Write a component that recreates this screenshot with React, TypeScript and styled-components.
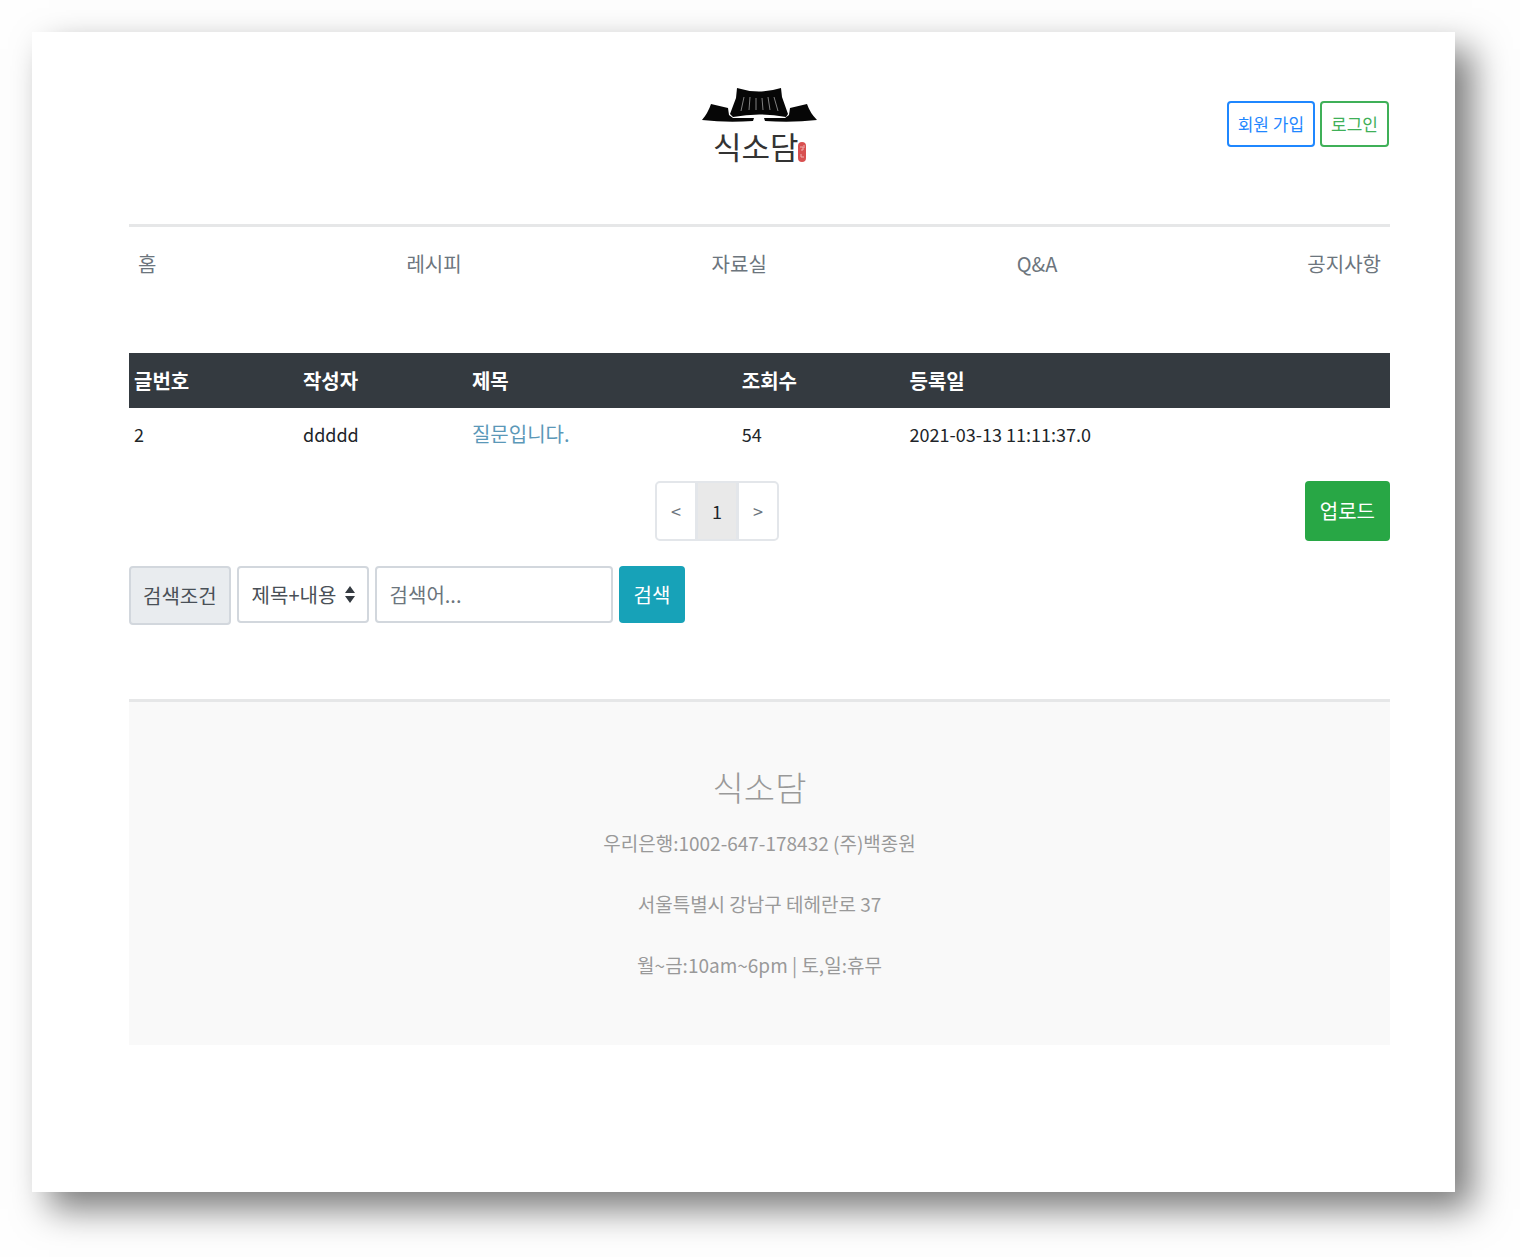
import React from "react";
import styled, { createGlobalStyle, css } from "styled-components";

const GlobalStyle = createGlobalStyle`
  *, *::before, *::after { box-sizing: border-box; }
  body {
    margin: 0;
    background: #fefefe;
    color: #212529;
    font-family: "Noto Sans CJK KR", "Noto Sans", sans-serif;
    font-size: 20px;
    line-height: 30px;
  }
  button, input, select { font: inherit; margin: 0; }
  a { text-decoration: none; color: inherit; }
`;

const Sheet = styled.div`
  margin: 32px 65px 65px 32px;
  padding: 0 65px 147px 97px;
  background: #fff;
  box-shadow: 17px 17px 34px rgba(0, 0, 0, 0.52);
`;

const Header = styled.header`
  display: grid;
  grid-template-columns: 1fr auto 1fr;
  align-items: center;
  height: 192px;
`;

const LogoLink = styled.a`
  grid-column: 2;
  display: block;
  height: 88px;
`;

const Account = styled.div`
  display: flex;
  justify-content: flex-end;
  gap: 5px;
  padding: 0 1px 8px 0;
`;

const OutlineButton = styled.button<{ $color: string }>`
  height: 46px;
  padding: 0 9px;
  border: 2px solid ${(p) => p.$color};
  border-radius: 4px;
  background: transparent;
  color: ${(p) => p.$color};
  font-size: 17px;
`;

const Nav = styled.nav`
  display: flex;
  justify-content: space-between;
  border-top: 3px solid #e6e7e8;
  padding: 22px 9px 74px;
  color: #6c757d;
`;

const Table = styled.table`
  width: 100%;
  table-layout: fixed;
  border-collapse: collapse;
  text-align: left;
`;

const HeadCell = styled.th<{ $share?: number }>`
  width: ${(p) => (p.$share ? `${p.$share}%` : "auto")};
  height: 55px;
  padding: 0 5px;
  background: #343a40;
  color: #fff;
  font-weight: 700;
`;

const Cell = styled.td<{ $latin?: boolean }>`
  height: 52px;
  padding: 0 5px;
  font-size: ${(p) => (p.$latin ? 18 : 20)}px;
`;

const PostLink = styled.a`
  color: #5b98b8;
`;

const Actions = styled.div`
  display: flex;
  align-items: center;
  margin-top: 21px;
`;

const Pager = styled.div`
  flex: 1;
  display: flex;
  justify-content: center;
`;

const PageButton = styled.button<{ $current?: boolean }>`
  width: 42px;
  height: 60px;
  padding: 0;
  border: 2px solid #e3e6ea;
  background: ${(p) => (p.$current ? "#e9e9e9" : "#fff")};
  color: ${(p) => (p.$current ? "#212529" : "#6c757d")};
  font-size: 18px;

  & + & { margin-left: -1px; }
  &:first-child { border-radius: 5px 0 0 5px; }
  &:last-child { border-radius: 0 5px 5px 0; }
`;

const SolidButton = styled.button<{ $color: string; $tall?: boolean }>`
  height: ${(p) => (p.$tall ? 60 : 57)}px;
  padding: 0 15px;
  border: 0;
  border-radius: 4px;
  background: ${(p) => p.$color};
  color: #fff;
`;

const Search = styled.form`
  display: flex;
  align-items: flex-start;
  gap: 6px;
  margin-top: 25px;
`;

const field = css`
  border: 2px solid #d2d7dd;
  border-radius: 4px;
`;

const SearchLabel = styled.label`
  ${field}
  height: 59px;
  padding: 0 12px;
  background: #e9ecef;
  color: #495057;
  line-height: 55px;
`;

const SelectBox = styled.div`
  position: relative;
  color: #343a40;

  svg {
    position: absolute;
    right: 14px;
    top: 20px;
    pointer-events: none;
  }
`;

const Select = styled.select`
  ${field}
  appearance: none;
  display: block;
  width: 132px;
  height: 57px;
  padding: 0 13px;
  background: #fff;
  color: #495057;
`;

const Keyword = styled.input`
  ${field}
  width: 238px;
  height: 57px;
  padding: 0 13px;
  background: #fff;
  color: #495057;

  &::placeholder { color: #6c757d; opacity: 1; }
`;

const Footer = styled.footer`
  margin-top: 74px;
  padding: 60px 0 65px;
  border-top: 3px solid #e6e7e8;
  background: #f9f9f9;
  color: #999;
  text-align: center;
  font-size: 19px;
`;

const Brand = styled.h2`
  margin: 0 0 16px;
  font-size: 34px;
  font-weight: 300;
  line-height: 50px;
`;

const Info = styled.p`
  margin: 0;

  & + & { margin-top: 31px; }
`;

const Logo = () => (
  <svg width="116" height="88" viewBox="0 0 116 88" overflow="visible" role="img" aria-label="식소담">
    <path d="M35 4 Q57 11 79 4 L80 13 L86 30 L84 33 Q57 28 31 33 L28 30 L34 14Z" fill="#060606" />
    <path d="M9 20 L26 24 L27 31 L31 34 L52 34 L51 37 Q25 39 0 36 Q6 29 9 20Z" fill="#060606" />
    <path d="M105 20 L88 24 L87 31 L83 34 L62 34 L63 37 Q90 39 115 36 Q108 29 105 20Z" fill="#060606" />
    <path
      d="M42 13 L39 27 M48 13 L47 26 M54 14 V26 M60 14 L61 26 M66 13 L68 26 M72 13 L76 27"
      stroke="#808080"
      strokeWidth="1"
      fill="none"
    />
    <text x="11" y="75" fontSize="31" fontWeight="400" fill="#333">
      식소담
    </text>
    <rect x="96" y="58" width="8" height="20" rx="4" fill="#d85050" />
    <path d="M98 63 h3 v3 h-2 M99 70 v3 h3 M102 61 v3" stroke="#efb0b0" strokeWidth="1" fill="none" />
  </svg>
);

const menu = ["홈", "레시피", "자료실", "Q&A", "공지사항"];

const columns = [
  { title: "글번호", share: 13.4 },
  { title: "작성자", share: 13.4 },
  { title: "제목", share: 21.4 },
  { title: "조회수", share: 13.3 },
  { title: "등록일" },
];

const posts = [
  { id: 2, author: "ddddd", title: "질문입니다.", views: 54, date: "2021-03-13 11:11:37.0" },
];

export default function App() {
  return (
    <>
      <GlobalStyle />
      <Sheet>
        <Header>
          <LogoLink href="#">
            <Logo />
          </LogoLink>
          <Account>
            <OutlineButton type="button" $color="#1f87ff">회원 가입</OutlineButton>
            <OutlineButton type="button" $color="#3fb058">로그인</OutlineButton>
          </Account>
        </Header>

        <Nav>
          {menu.map((item) => (
            <a key={item} href="#">{item}</a>
          ))}
        </Nav>

        <main>
          <Table>
            <thead>
              <tr>
                {columns.map((c) => (
                  <HeadCell key={c.title} scope="col" $share={c.share}>{c.title}</HeadCell>
                ))}
              </tr>
            </thead>
            <tbody>
              {posts.map((p) => (
                <tr key={p.id}>
                  <Cell $latin>{p.id}</Cell>
                  <Cell $latin>{p.author}</Cell>
                  <Cell><PostLink href="#">{p.title}</PostLink></Cell>
                  <Cell $latin>{p.views}</Cell>
                  <Cell $latin>{p.date}</Cell>
                </tr>
              ))}
            </tbody>
          </Table>

          <Actions>
            <Pager>
              <PageButton type="button">&lt;</PageButton>
              <PageButton type="button" $current>1</PageButton>
              <PageButton type="button">&gt;</PageButton>
            </Pager>
            <SolidButton type="button" $color="#28a745" $tall>업로드</SolidButton>
          </Actions>

          <Search onSubmit={(e) => e.preventDefault()}>
            <SearchLabel htmlFor="condition">검색조건</SearchLabel>
            <SelectBox>
              <Select id="condition" defaultValue="both">
                <option value="both">제목+내용</option>
                <option value="title">제목</option>
                <option value="body">내용</option>
              </Select>
              <svg width="10" height="17" viewBox="0 0 10 17" aria-hidden="true">
                <path d="M5 0 L10 7 H0Z M5 17 L10 10 H0Z" fill="currentColor" />
              </svg>
            </SelectBox>
            <Keyword type="text" aria-label="검색어" placeholder="검색어..." />
            <SolidButton type="submit" $color="#17a2b8">검색</SolidButton>
          </Search>
        </main>

        <Footer>
          <Brand>식소담</Brand>
          <Info>우리은행:1002-647-178432 (주)백종원</Info>
          <Info>서울특별시 강남구 테헤란로 37</Info>
          <Info>월~금:10am~6pm | 토,일:휴무</Info>
        </Footer>
      </Sheet>
    </>
  );
}
